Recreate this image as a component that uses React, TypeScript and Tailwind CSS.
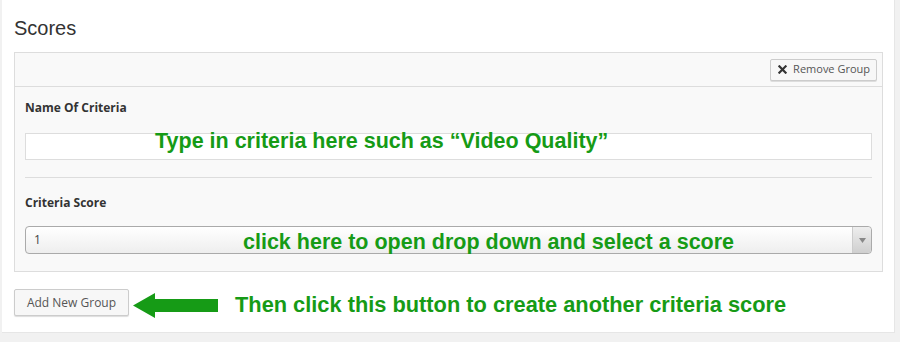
const GREEN = "text-[#169b16]";

function RemoveIcon() {
  return (
    <svg width="9" height="9" viewBox="0 0 10 10" className="shrink-0">
      <path d="M1.5 1.5 L8.5 8.5 M8.5 1.5 L1.5 8.5" stroke="#333" strokeWidth="2.4" strokeLinecap="square" />
    </svg>
  );
}

function LeftArrow() {
  return (
    <svg width="85" height="25" viewBox="0 0 85 25">
      <path d="M0 12.5 L22 0 L22 6 L85 6 L85 19 L22 19 L22 25 Z" fill="#169b16" />
    </svg>
  );
}

export default function App() {
  return (
    <div className="w-[900px] h-[342px] bg-[#f1f1f1] pl-[2px] font-['Liberation_Sans',Arial,sans-serif]">
      <div className="w-[893px] h-[333px] bg-white px-[12px] pt-[16px] border-r border-b border-[#e6e6e6]">
        {/* Heading */}
        <h2 className="text-[20px] leading-[24px] text-[#333]">Scores</h2>

        {/* Group panel */}
        <div className="mt-[12px] w-[869px] border border-[#dddddd] bg-[#f9f9f9]">
          <div className="h-[34px] flex items-center justify-end pr-[5px] border-b border-[#dddddd]">
            <button className="h-[22px] pl-[7px] pr-[6px] flex items-center gap-[6px] bg-[#f7f7f7] border border-[#cccccc] rounded-[2px] text-[11px] text-[#555] font-['Open_Sans',sans-serif] shadow-[0_1px_0_#ddd]">
              <RemoveIcon />
              Remove Group
            </button>
          </div>

          <div className="px-[10px] pt-[13px] pb-[17px] font-['Open_Sans',sans-serif]">
            <div className="text-[12px] leading-[16px] font-bold text-[#333]">Name Of Criteria</div>

            <div className="relative mt-[17px] h-[27px] bg-white border border-[#dddddd]">
              <span className={`absolute left-[129px] top-[-5px] whitespace-nowrap text-[21.5px] leading-[24px] font-bold font-['Liberation_Sans',Arial,sans-serif] ${GREEN}`}>
                Type in criteria here such as “Video Quality”
              </span>
            </div>

            <div className="mt-[17px] h-px bg-[#dddddd]" />

            <div className="mt-[17px] text-[12px] leading-[16px] font-bold text-[#333]">Criteria Score</div>

            <div className="relative mt-[15px] h-[28px] flex items-stretch bg-gradient-to-b from-white to-[#eeeeee] border border-[#aaaaaa] rounded-[4px]">
              <span className="flex-1 pl-[8px] flex items-center text-[12px] text-[#444]">1</span>
              <span className="w-[19px] flex items-center justify-center border-l border-[#cccccc] bg-gradient-to-b from-[#eeeeee] to-[#cfcfcf] rounded-r-[4px]">
                <svg width="7" height="5" viewBox="0 0 7 5">
                  <path d="M0 0 L7 0 L3.5 5 Z" fill="#888" />
                </svg>
              </span>
              <span className={`absolute left-[217px] top-[3px] whitespace-nowrap text-[21.5px] leading-[24px] font-bold font-['Liberation_Sans',Arial,sans-serif] ${GREEN}`}>
                click here to open drop down and select a score
              </span>
            </div>
          </div>
        </div>

        {/* Add row */}
        <div className="mt-[17px] flex items-start">
          <button className="h-[27px] w-[115px] bg-[#f7f7f7] border border-[#cccccc] rounded-[2px] text-[12px] text-[#555] font-['Open_Sans',sans-serif] shadow-[0_1px_1px_#ddd]">
            Add New Group
          </button>
          <span className="ml-[4px] mt-[4px] flex">
            <LeftArrow />
          </span>
          <span className={`ml-[17px] mt-[3px] whitespace-nowrap text-[21.8px] leading-[25px] font-bold ${GREEN}`}>
            Then click this button to create another criteria score
          </span>
        </div>
      </div>
    </div>
  );
}
